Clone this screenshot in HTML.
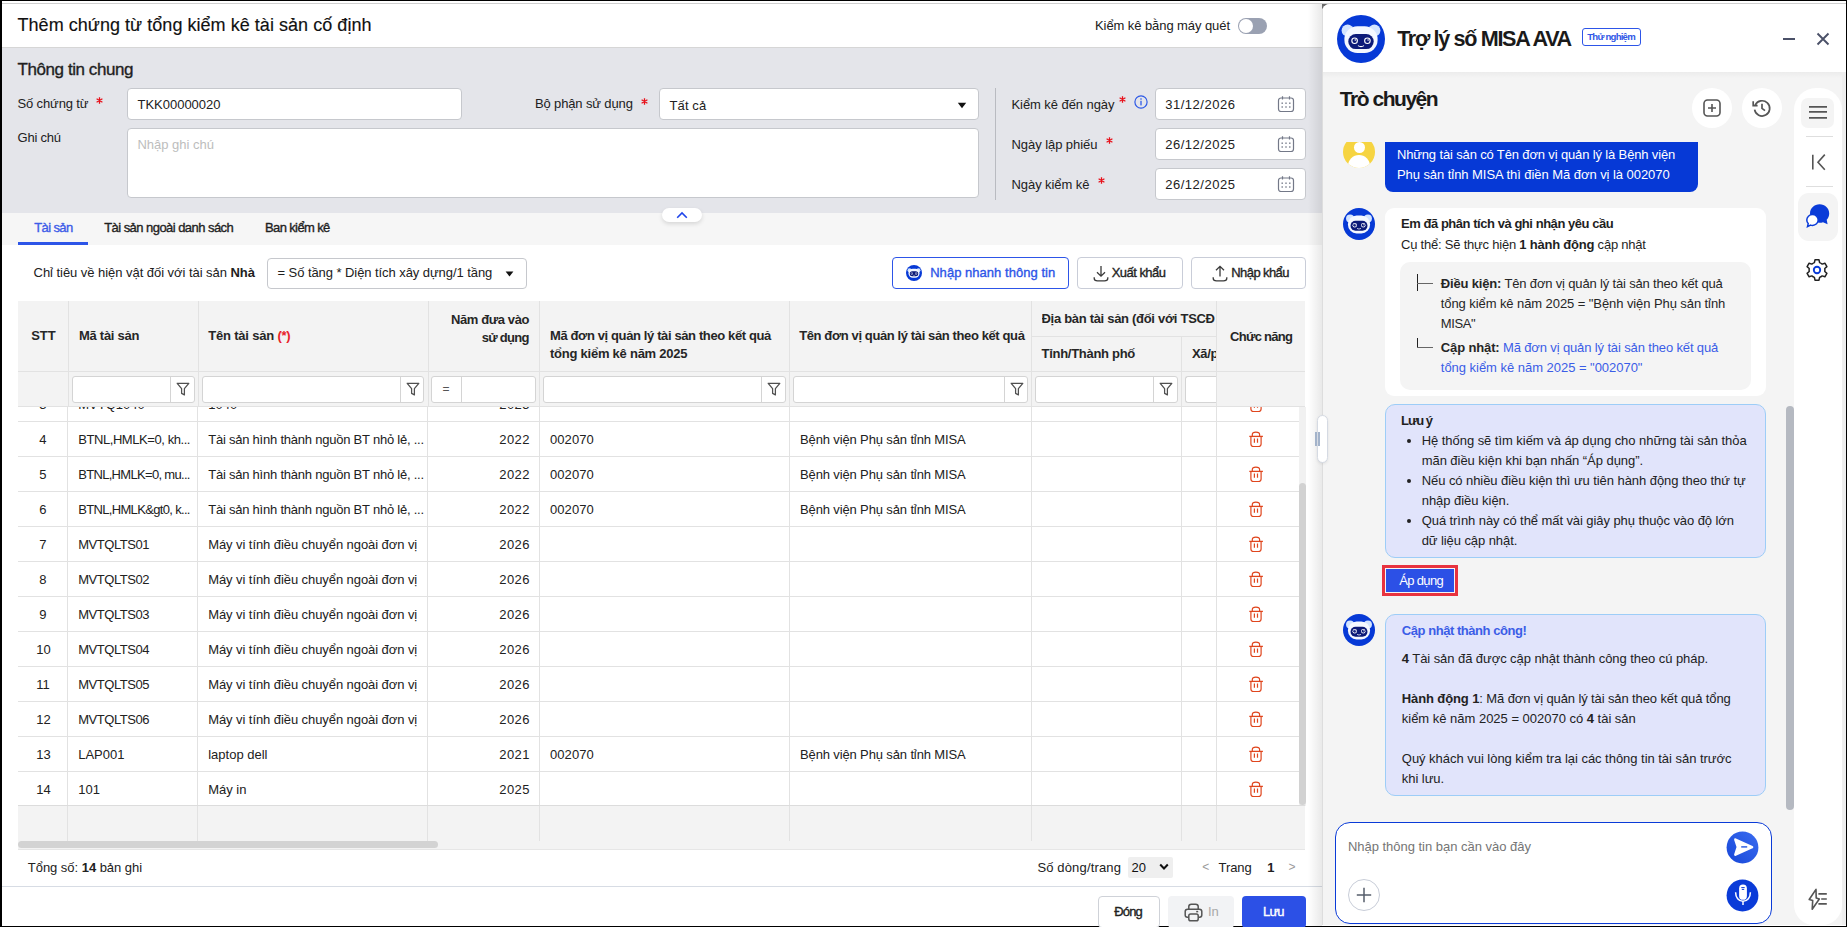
<!DOCTYPE html>
<html><head><meta charset="utf-8">
<style>
*{box-sizing:border-box;margin:0;padding:0}
html,body{width:1847px;height:927px;overflow:hidden;background:#000;font-family:"Liberation Sans",sans-serif;color:#212121;position:relative}
.a{position:absolute}
.t{position:absolute;white-space:nowrap}
.lbl{position:absolute;font-size:13px;color:#212121;white-space:nowrap}
.req{color:#e00;font-size:14px}
.inp{position:absolute;background:#fff;border:1px solid #c6c8cd;border-radius:4px;font-size:13px;color:#212121;padding-left:10px;white-space:nowrap}
.th{position:absolute;font-size:13px;font-weight:bold;color:#262626;white-space:nowrap}
.vl{position:absolute;width:1px;background:#e3e3e3}
.hl{position:absolute;height:1px;background:#e3e3e3}
.td{position:absolute;font-size:13px;color:#212121;white-space:nowrap;line-height:15px}
.btn{position:absolute;border:1px solid #c9cdd8;border-radius:4px;background:#fff;font-size:13px;white-space:nowrap}
.med{-webkit-text-stroke:0.35px currentColor}

</style></head>
<body>
<div class="a" style="left:2px;top:1px;width:1844px;height:925px;background:#fff"></div>
<div class="a" style="left:2px;top:3px;width:1844px;height:1px;background:#cfcfcf"></div>
<div class="a" style="left:2px;top:47px;width:1320px;height:1px;background:#d6d6d6;border-radius:0;"></div>
<div class="t" style="left:17.5px;top:15.3px;font-size:18px;line-height:normal;font-weight:normal;color:#111;letter-spacing:0.042px;-webkit-text-stroke:0.15px #111;">Thêm chứng từ tổng kiểm kê tài sản cố định</div>
<div class="t" style="left:1095.0px;top:17.5px;font-size:13px;line-height:normal;font-weight:normal;color:#212121;letter-spacing:-0.079px;">Kiểm kê bằng máy quét</div>
<div class="a" style="left:1238px;top:18px;width:29px;height:16px;background:#9aa1b2;border-radius:8px;"></div>
<div class="a" style="left:1239px;top:19px;width:14px;height:14px;background:#fff;border-radius:7px;"></div>
<div class="a" style="left:2px;top:48px;width:1320px;height:165px;background:#e4e5ea;border-radius:0;"></div>
<div class="t med" style="left:17.5px;top:59.8px;font-size:17px;line-height:normal;font-weight:normal;color:#1f1f1f;letter-spacing:-0.423px;">Thông tin chung</div>
<div class="t" style="left:17.5px;top:96.1px;font-size:13px;line-height:normal;font-weight:normal;color:#212121;letter-spacing:-0.134px;">Số chứng từ</div>
<svg class="a" style="left:96px;top:97px" width="7" height="7" viewBox="0 0 7 7"><path d="M3.5 0.2V6.8M0.6 1.8L6.4 5.2M6.4 1.8L0.6 5.2" stroke="#e8101a" stroke-width="1.3"/></svg><div class="a" style="left:127px;top:88px;width:335px;height:32px;background:#fff;border:1px solid #c6c8cd;border-radius:4px;"></div>
<div class="t" style="left:137.5px;top:97.4px;font-size:13px;line-height:normal;font-weight:normal;color:#212121;letter-spacing:-0.013px;">TKK00000020</div>
<div class="t" style="left:17.5px;top:130.0px;font-size:13px;line-height:normal;font-weight:normal;color:#212121;letter-spacing:-0.219px;">Ghi chú</div>
<div class="a" style="left:127px;top:128px;width:852px;height:70px;background:#fff;border:1px solid #c6c8cd;border-radius:4px;"></div>
<div class="t" style="left:137.5px;top:137.4px;font-size:13px;line-height:normal;font-weight:normal;color:#bdbdbd;letter-spacing:-0.02px;">Nhập ghi chú</div>
<div class="t" style="left:534.9px;top:96.4px;font-size:13px;line-height:normal;font-weight:normal;color:#212121;letter-spacing:-0.127px;">Bộ phận sử dụng</div>
<svg class="a" style="left:641px;top:97.5px" width="7" height="7" viewBox="0 0 7 7"><path d="M3.5 0.2V6.8M0.6 1.8L6.4 5.2M6.4 1.8L0.6 5.2" stroke="#e8101a" stroke-width="1.3"/></svg><div class="a" style="left:659px;top:88px;width:320px;height:32px;background:#fff;border:1px solid #c6c8cd;border-radius:4px;"></div>
<div class="t" style="left:669.5px;top:97.6px;font-size:13px;line-height:normal;font-weight:normal;color:#212121;letter-spacing:0.115px;">Tất cả</div>
<svg class="a" style="left:957px;top:102px" width="10" height="7" viewBox="0 0 10 7"><path d="M0.8 0.8H9.2L5 6.2Z" fill="#111"/></svg>
<div class="a" style="left:995px;top:88px;width:1px;height:112px;background:#b9bbc1;border-radius:0;"></div>
<div class="t" style="left:1011.5px;top:96.6px;font-size:13px;line-height:normal;font-weight:normal;color:#212121;letter-spacing:-0.072px;">Kiểm kê đến ngày</div>
<svg class="a" style="left:1118.5px;top:95.5px" width="7" height="7" viewBox="0 0 7 7"><path d="M3.5 0.2V6.8M0.6 1.8L6.4 5.2M6.4 1.8L0.6 5.2" stroke="#e8101a" stroke-width="1.3"/></svg><svg class="a" style="left:1134px;top:95px" width="14" height="14" viewBox="0 0 14 14"><circle cx="7" cy="7" r="6.1" fill="none" stroke="#2d59e6" stroke-width="1.2"/><rect x="6.35" y="5.8" width="1.3" height="4.6" fill="#2d59e6"/><rect x="6.35" y="3.3" width="1.3" height="1.4" fill="#2d59e6"/></svg>
<div class="t" style="left:1011.5px;top:136.6px;font-size:13px;line-height:normal;font-weight:normal;color:#212121;letter-spacing:-0.064px;">Ngày lập phiếu</div>
<svg class="a" style="left:1105.5px;top:137px" width="7" height="7" viewBox="0 0 7 7"><path d="M3.5 0.2V6.8M0.6 1.8L6.4 5.2M6.4 1.8L0.6 5.2" stroke="#e8101a" stroke-width="1.3"/></svg><div class="t" style="left:1011.5px;top:176.8px;font-size:13px;line-height:normal;font-weight:normal;color:#212121;letter-spacing:-0.068px;">Ngày kiểm kê</div>
<svg class="a" style="left:1097.5px;top:177px" width="7" height="7" viewBox="0 0 7 7"><path d="M3.5 0.2V6.8M0.6 1.8L6.4 5.2M6.4 1.8L0.6 5.2" stroke="#e8101a" stroke-width="1.3"/></svg><div class="a" style="left:1155px;top:88px;width:151px;height:32px;background:#fff;border:1px solid #c6c8cd;border-radius:4px;"></div>
<div class="t" style="left:1165.2px;top:97.4px;font-size:13px;line-height:normal;font-weight:normal;color:#212121;letter-spacing:0.514px;">31/12/2026</div>
<svg class="a" style="left:1277px;top:95px" width="18" height="18" viewBox="0 0 18 18"><rect x="1.5" y="3" width="15" height="13.5" rx="2.5" fill="none" stroke="#737888" stroke-width="1.2"/><path d="M5.5 1.2V4.5M12.5 1.2V4.5" stroke="#737888" stroke-width="1.2"/><g fill="#737888"><rect x="4.5" y="7.5" width="1.4" height="1.4"/><rect x="8.3" y="7.5" width="1.4" height="1.4"/><rect x="12.1" y="7.5" width="1.4" height="1.4"/><rect x="4.5" y="11.3" width="1.4" height="1.4"/><rect x="8.3" y="11.3" width="1.4" height="1.4"/><rect x="12.1" y="11.3" width="1.4" height="1.4"/></g></svg>
<div class="a" style="left:1155px;top:128px;width:151px;height:32px;background:#fff;border:1px solid #c6c8cd;border-radius:4px;"></div>
<div class="t" style="left:1165.2px;top:137.4px;font-size:13px;line-height:normal;font-weight:normal;color:#212121;letter-spacing:0.514px;">26/12/2025</div>
<svg class="a" style="left:1277px;top:135px" width="18" height="18" viewBox="0 0 18 18"><rect x="1.5" y="3" width="15" height="13.5" rx="2.5" fill="none" stroke="#737888" stroke-width="1.2"/><path d="M5.5 1.2V4.5M12.5 1.2V4.5" stroke="#737888" stroke-width="1.2"/><g fill="#737888"><rect x="4.5" y="7.5" width="1.4" height="1.4"/><rect x="8.3" y="7.5" width="1.4" height="1.4"/><rect x="12.1" y="7.5" width="1.4" height="1.4"/><rect x="4.5" y="11.3" width="1.4" height="1.4"/><rect x="8.3" y="11.3" width="1.4" height="1.4"/><rect x="12.1" y="11.3" width="1.4" height="1.4"/></g></svg>
<div class="a" style="left:1155px;top:168px;width:151px;height:32px;background:#fff;border:1px solid #c6c8cd;border-radius:4px;"></div>
<div class="t" style="left:1165.2px;top:177.4px;font-size:13px;line-height:normal;font-weight:normal;color:#212121;letter-spacing:0.514px;">26/12/2025</div>
<svg class="a" style="left:1277px;top:175px" width="18" height="18" viewBox="0 0 18 18"><rect x="1.5" y="3" width="15" height="13.5" rx="2.5" fill="none" stroke="#737888" stroke-width="1.2"/><path d="M5.5 1.2V4.5M12.5 1.2V4.5" stroke="#737888" stroke-width="1.2"/><g fill="#737888"><rect x="4.5" y="7.5" width="1.4" height="1.4"/><rect x="8.3" y="7.5" width="1.4" height="1.4"/><rect x="12.1" y="7.5" width="1.4" height="1.4"/><rect x="4.5" y="11.3" width="1.4" height="1.4"/><rect x="8.3" y="11.3" width="1.4" height="1.4"/><rect x="12.1" y="11.3" width="1.4" height="1.4"/></g></svg>
<div class="a" style="left:2px;top:213px;width:1320px;height:32px;background:#f6f6f6;border-radius:0;"></div>
<div class="a" style="left:662px;top:208px;width:40px;height:14px;background:#fff;border-radius:7px;box-shadow:0 2px 4px rgba(0,0,0,.13);"></div>
<svg class="a" style="left:676px;top:210.5px" width="12" height="8" viewBox="0 0 12 8"><path d="M1.2 6.8 L6 2 L10.8 6.8" fill="none" stroke="#1f45ea" stroke-width="1.6"/></svg>
<div class="t med" style="left:34.2px;top:220.4px;font-size:13px;line-height:normal;font-weight:normal;color:#3d5ce8;letter-spacing:-0.607px;">Tài sản</div>
<div class="a" style="left:18px;top:242px;width:70px;height:3px;background:#2d55e8;border-radius:0;"></div>
<div class="t med" style="left:104.2px;top:220.4px;font-size:13px;line-height:normal;font-weight:normal;color:#1f1f1f;letter-spacing:-0.548px;">Tài sản ngoài danh sách</div>
<div class="t med" style="left:265.0px;top:220.4px;font-size:13px;line-height:normal;font-weight:normal;color:#1f1f1f;letter-spacing:-0.625px;">Ban kiểm kê</div>
<div class="t" style="left:33.6px;top:265.0px;font-size:13px;line-height:normal;font-weight:normal;color:#212121;letter-spacing:-0.047px;">Chỉ tiêu về hiện vật đối với tài sản <b>Nhà</b></div>
<div class="a" style="left:267px;top:258px;width:260px;height:31px;background:#fff;border:1px solid #c6c8cd;border-radius:4px;"></div>
<div class="t" style="left:277.5px;top:265.4px;font-size:13px;line-height:normal;font-weight:normal;color:#212121;letter-spacing:-0.067px;">= Số tầng * Diện tích xây dựng/1 tầng</div>
<svg class="a" style="left:505px;top:271px" width="9" height="6" viewBox="0 0 9 6"><path d="M0.6 0.6H8.4L4.5 5.4Z" fill="#111"/></svg>
<div class="a" style="left:892px;top:257px;width:177px;height:32px;background:#fff;border:1px solid #2d55e8;border-radius:4px;"></div>
<svg class="a" style="left:906px;top:265px" width="16" height="16" viewBox="0 0 48 48"><circle cx="24" cy="24" r="24" fill="#0639d6"/><circle cx="10.6" cy="15.6" r="6" fill="#d3e4ff"/><circle cx="37.4" cy="15.6" r="6" fill="#d3e4ff"/><rect x="7.4" y="11.3" width="33.2" height="26.8" rx="13" fill="#f4f8ff"/><rect x="11.3" y="19" width="25.4" height="15.1" rx="7.5" fill="#0c1a78"/><circle cx="17.6" cy="25.8" r="3.3" fill="#fff"/><circle cx="17.6" cy="25.8" r="2.2" fill="#0c1a78"/><circle cx="18.3" cy="25" r="0.8" fill="#fff"/><circle cx="30.4" cy="25.8" r="3.3" fill="#fff"/><circle cx="30.4" cy="25.8" r="2.2" fill="#0c1a78"/><circle cx="31.1" cy="25" r="0.8" fill="#fff"/><path d="M21 30.6Q24 32.6 27 30.6" fill="none" stroke="#fff" stroke-width="1.1"/></svg>
<div class="t med" style="left:930.2px;top:264.9px;font-size:13px;line-height:normal;font-weight:normal;color:#2d55e8;letter-spacing:0.035px;">Nhập nhanh thông tin</div>
<div class="a" style="left:1077px;top:257px;width:106px;height:32px;background:#fff;border:1px solid #c9cdd8;border-radius:4px;"></div>
<svg class="a" style="left:1093px;top:265px" width="16" height="17" viewBox="0 0 16 17"><path d="M8 1V11M4 7.2L8 11.2L12 7.2" fill="none" stroke="#3a3a3a" stroke-width="1.3"/><path d="M1.2 12.2V13.2C1.2 15 2.8 15.8 4.5 15.8H11.5C13.2 15.8 14.8 15 14.8 13.2V12.2" fill="none" stroke="#3a3a3a" stroke-width="1.3"/></svg>
<div class="t med" style="left:1111.7px;top:265.1px;font-size:13px;line-height:normal;font-weight:normal;color:#1f1f1f;letter-spacing:-0.531px;">Xuất khẩu</div>
<div class="a" style="left:1191px;top:257px;width:115px;height:32px;background:#fff;border:1px solid #c9cdd8;border-radius:4px;"></div>
<svg class="a" style="left:1212px;top:265px" width="16" height="17" viewBox="0 0 16 17"><path d="M8 11.5V1.5M4 5.3L8 1.3L12 5.3" fill="none" stroke="#3a3a3a" stroke-width="1.3"/><path d="M1.2 12.2V13.2C1.2 15 2.8 15.8 4.5 15.8H11.5C13.2 15.8 14.8 15 14.8 13.2V12.2" fill="none" stroke="#3a3a3a" stroke-width="1.3"/></svg>
<div class="t med" style="left:1231.3px;top:265.1px;font-size:13px;line-height:normal;font-weight:normal;color:#1f1f1f;letter-spacing:-0.586px;">Nhập khẩu</div>
<div class="a" style="left:18px;top:301px;width:1287px;height:106px;background:#f3f3f3;border-radius:0;"></div>
<div class="a" style="left:18px;top:371px;width:1287px;height:1px;background:#e2e2e2;border-radius:0;"></div>
<div class="a" style="left:1031px;top:336px;width:185px;height:1px;background:#e2e2e2;border-radius:0;"></div>
<div class="a" style="left:68px;top:301px;width:1px;height:106px;background:#e2e2e2;border-radius:0;"></div>
<div class="a" style="left:198px;top:301px;width:1px;height:106px;background:#e2e2e2;border-radius:0;"></div>
<div class="a" style="left:428px;top:301px;width:1px;height:106px;background:#e2e2e2;border-radius:0;"></div>
<div class="a" style="left:539px;top:301px;width:1px;height:106px;background:#e2e2e2;border-radius:0;"></div>
<div class="a" style="left:789px;top:301px;width:1px;height:106px;background:#e2e2e2;border-radius:0;"></div>
<div class="a" style="left:1031px;top:301px;width:1px;height:106px;background:#e2e2e2;border-radius:0;"></div>
<div class="a" style="left:1181px;top:336px;width:1px;height:71px;background:#e2e2e2;border-radius:0;"></div>
<div class="t" style="left:31.2px;top:328.2px;font-size:13px;line-height:normal;font-weight:bold;color:#262626;letter-spacing:-0.031px;">STT</div>
<div class="t" style="left:78.9px;top:328.2px;font-size:13px;line-height:normal;font-weight:bold;color:#262626;letter-spacing:-0.251px;">Mã tài sản</div>
<div class="t" style="left:208.3px;top:328.2px;font-size:13px;line-height:normal;font-weight:bold;color:#262626;letter-spacing:-0.204px;">Tên tài sản <span style="color:#e8202a">(*)</span></div>
<div class="t" style="right:1317.6px;top:312.4px;font-size:13px;line-height:normal;font-weight:bold;color:#262626;text-align:right;letter-spacing:-0.399px;margin-right:0.399px;">Năm đưa vào</div>
<div class="t" style="right:1317.6px;top:330.2px;font-size:13px;line-height:normal;font-weight:bold;color:#262626;text-align:right;letter-spacing:-0.739px;margin-right:0.739px;">sử dụng</div>
<div class="t" style="left:550.0px;top:328.2px;font-size:13px;line-height:normal;font-weight:bold;color:#262626;letter-spacing:-0.38px;">Mã đơn vị quản lý tài sản theo kết quả</div>
<div class="t" style="left:550.0px;top:346.0px;font-size:13px;line-height:normal;font-weight:bold;color:#262626;letter-spacing:-0.242px;">tổng kiểm kê năm 2025</div>
<div class="t" style="left:799.2px;top:328.2px;font-size:13px;line-height:normal;font-weight:bold;color:#262626;letter-spacing:-0.387px;">Tên đơn vị quản lý tài sản theo kết quả</div>
<div class="t" style="left:1041.5px;top:310.9px;font-size:13px;line-height:normal;font-weight:bold;color:#262626;width:174px;overflow:hidden;letter-spacing:-0.3px;">Địa bàn tài sản (đối với TSCĐ là đất)</div>
<div class="t" style="left:1041.5px;top:345.9px;font-size:13px;line-height:normal;font-weight:bold;color:#262626;letter-spacing:-0.283px;">Tỉnh/Thành phố</div>
<div class="t" style="left:1191.9px;top:345.9px;font-size:13px;line-height:normal;font-weight:bold;color:#262626;width:24px;overflow:hidden;letter-spacing:-0.3px;">Xã/phường</div>
<div class="a" style="left:1216px;top:301px;width:89px;height:106px;background:#f3f3f3;border-radius:0;border-left:1px solid #e2e2e2;"></div>
<div class="t" style="left:1230.0px;top:328.6px;font-size:13px;line-height:normal;font-weight:bold;color:#262626;letter-spacing:-0.705px;">Chức năng</div>
<div class="a" style="left:1216px;top:371px;width:89px;height:1px;background:#e2e2e2;border-radius:0;"></div>
<div class="a" style="left:72px;top:376px;width:123px;height:27px;background:#fff;border:1px solid #d4d4d4;border-radius:3px;"></div>
<div class="a" style="left:170px;top:376px;width:1px;height:27px;background:#d4d4d4;border-radius:0;"></div>
<svg class="a" style="left:176px;top:382px" width="14" height="15" viewBox="0 0 14 15"><path d="M1.2 1.3H12.8L8.4 6.6V12.9L5.6 11.4V6.6Z" fill="none" stroke="#505050" stroke-width="1.25" stroke-linejoin="round"/></svg>
<div class="a" style="left:202px;top:376px;width:222px;height:27px;background:#fff;border:1px solid #d4d4d4;border-radius:3px;"></div>
<div class="a" style="left:400px;top:376px;width:1px;height:27px;background:#d4d4d4;border-radius:0;"></div>
<svg class="a" style="left:406px;top:382px" width="14" height="15" viewBox="0 0 14 15"><path d="M1.2 1.3H12.8L8.4 6.6V12.9L5.6 11.4V6.6Z" fill="none" stroke="#505050" stroke-width="1.25" stroke-linejoin="round"/></svg>
<div class="a" style="left:431px;top:376px;width:105px;height:27px;background:#fff;border:1px solid #d4d4d4;border-radius:3px;"></div>
<div class="a" style="left:461px;top:376px;width:1px;height:27px;background:#d4d4d4;border-radius:0;"></div>
<div class="t" style="left:442.5px;top:382.1px;font-size:12px;line-height:normal;font-weight:normal;color:#555;">=</div>
<div class="a" style="left:543px;top:376px;width:243px;height:27px;background:#fff;border:1px solid #d4d4d4;border-radius:3px;"></div>
<div class="a" style="left:761px;top:376px;width:1px;height:27px;background:#d4d4d4;border-radius:0;"></div>
<svg class="a" style="left:767px;top:382px" width="14" height="15" viewBox="0 0 14 15"><path d="M1.2 1.3H12.8L8.4 6.6V12.9L5.6 11.4V6.6Z" fill="none" stroke="#505050" stroke-width="1.25" stroke-linejoin="round"/></svg>
<div class="a" style="left:793px;top:376px;width:235px;height:27px;background:#fff;border:1px solid #d4d4d4;border-radius:3px;"></div>
<div class="a" style="left:1004px;top:376px;width:1px;height:27px;background:#d4d4d4;border-radius:0;"></div>
<svg class="a" style="left:1010px;top:382px" width="14" height="15" viewBox="0 0 14 15"><path d="M1.2 1.3H12.8L8.4 6.6V12.9L5.6 11.4V6.6Z" fill="none" stroke="#505050" stroke-width="1.25" stroke-linejoin="round"/></svg>
<div class="a" style="left:1035px;top:376px;width:143px;height:27px;background:#fff;border:1px solid #d4d4d4;border-radius:3px;"></div>
<div class="a" style="left:1153px;top:376px;width:1px;height:27px;background:#d4d4d4;border-radius:0;"></div>
<svg class="a" style="left:1159px;top:382px" width="14" height="15" viewBox="0 0 14 15"><path d="M1.2 1.3H12.8L8.4 6.6V12.9L5.6 11.4V6.6Z" fill="none" stroke="#505050" stroke-width="1.25" stroke-linejoin="round"/></svg>
<div class="a" style="left:1185px;top:376px;width:31px;height:27px;background:#fff;border-radius:3px 0 0 3px;border:1px solid #d4d4d4;border-right:none;"></div>
<div class="a" style="left:18px;top:407px;width:1281px;height:399px;overflow:hidden;background:#fff">
<div class="a" style="left:0px;top:14px;width:1281px;height:1px;background:#e2e2e2;border-radius:0;"></div>
<div class="t" style="left:21.2px;top:-9.7px;font-size:13px;line-height:normal;font-weight:normal;color:#212121;">3</div>
<div class="t" style="left:60.2px;top:-9.7px;font-size:13px;line-height:normal;font-weight:normal;color:#212121;">MVTQ1040</div>
<div class="t" style="left:190.2px;top:-9.7px;font-size:13px;line-height:normal;font-weight:normal;color:#212121;">1040</div>
<div class="t" style="right:769.5px;top:-9.7px;font-size:13px;line-height:normal;font-weight:normal;color:#212121;text-align:right;letter-spacing:0.426px;margin-right:-0.426px;">2025</div>
<svg class="a" style="left:1231px;top:-11px" width="15" height="17" viewBox="0 0 15 17"><path d="M0.3 5.4H13.9" stroke="#e0461e" stroke-width="1.3"/><path d="M3.3 5.4V3.6C3.3 1.9 4.5 1.1 6.9 1.1C9.3 1.1 10.6 1.9 10.6 3.6V5.4" fill="none" stroke="#e0461e" stroke-width="1.2"/><path d="M1.9 5.4V13C1.9 14.7 2.9 15.5 4.6 15.5H9.4C11.1 15.5 12.1 14.7 12.1 13V5.4" fill="none" stroke="#e0461e" stroke-width="1.2"/><path d="M5.4 7.4V11.8M8.5 7.4V11.8" stroke="#e0461e" stroke-width="1.2"/></svg>
<div class="a" style="left:0px;top:49px;width:1281px;height:1px;background:#e2e2e2;border-radius:0;"></div>
<div class="t" style="left:21.2px;top:25.3px;font-size:13px;line-height:normal;font-weight:normal;color:#212121;">4</div>
<div class="t" style="left:60.2px;top:25.3px;font-size:13px;line-height:normal;font-weight:normal;color:#212121;letter-spacing:-0.428px;">BTNL,HMLK=0, kh...</div>
<div class="t" style="left:190.2px;top:25.3px;font-size:13px;line-height:normal;font-weight:normal;color:#212121;letter-spacing:-0.227px;">Tài sản hình thành nguồn BT nhỏ lẻ, ...</div>
<div class="t" style="right:769.5px;top:25.3px;font-size:13px;line-height:normal;font-weight:normal;color:#212121;text-align:right;letter-spacing:0.426px;margin-right:-0.426px;">2022</div>
<div class="t" style="left:532.0px;top:25.3px;font-size:13px;line-height:normal;font-weight:normal;color:#212121;letter-spacing:0.082px;">002070</div>
<div class="t" style="left:782.0px;top:25.3px;font-size:13px;line-height:normal;font-weight:normal;color:#212121;letter-spacing:-0.131px;">Bệnh viện Phụ sản tỉnh MISA</div>
<svg class="a" style="left:1231px;top:24px" width="15" height="17" viewBox="0 0 15 17"><path d="M0.3 5.4H13.9" stroke="#e0461e" stroke-width="1.3"/><path d="M3.3 5.4V3.6C3.3 1.9 4.5 1.1 6.9 1.1C9.3 1.1 10.6 1.9 10.6 3.6V5.4" fill="none" stroke="#e0461e" stroke-width="1.2"/><path d="M1.9 5.4V13C1.9 14.7 2.9 15.5 4.6 15.5H9.4C11.1 15.5 12.1 14.7 12.1 13V5.4" fill="none" stroke="#e0461e" stroke-width="1.2"/><path d="M5.4 7.4V11.8M8.5 7.4V11.8" stroke="#e0461e" stroke-width="1.2"/></svg>
<div class="a" style="left:0px;top:84px;width:1281px;height:1px;background:#e2e2e2;border-radius:0;"></div>
<div class="t" style="left:21.2px;top:60.3px;font-size:13px;line-height:normal;font-weight:normal;color:#212121;">5</div>
<div class="t" style="left:60.2px;top:60.3px;font-size:13px;line-height:normal;font-weight:normal;color:#212121;letter-spacing:-0.683px;">BTNL,HMLK=0, mu...</div>
<div class="t" style="left:190.2px;top:60.3px;font-size:13px;line-height:normal;font-weight:normal;color:#212121;letter-spacing:-0.227px;">Tài sản hình thành nguồn BT nhỏ lẻ, ...</div>
<div class="t" style="right:769.5px;top:60.3px;font-size:13px;line-height:normal;font-weight:normal;color:#212121;text-align:right;letter-spacing:0.426px;margin-right:-0.426px;">2022</div>
<div class="t" style="left:532.0px;top:60.3px;font-size:13px;line-height:normal;font-weight:normal;color:#212121;letter-spacing:0.082px;">002070</div>
<div class="t" style="left:782.0px;top:60.3px;font-size:13px;line-height:normal;font-weight:normal;color:#212121;letter-spacing:-0.131px;">Bệnh viện Phụ sản tỉnh MISA</div>
<svg class="a" style="left:1231px;top:59px" width="15" height="17" viewBox="0 0 15 17"><path d="M0.3 5.4H13.9" stroke="#e0461e" stroke-width="1.3"/><path d="M3.3 5.4V3.6C3.3 1.9 4.5 1.1 6.9 1.1C9.3 1.1 10.6 1.9 10.6 3.6V5.4" fill="none" stroke="#e0461e" stroke-width="1.2"/><path d="M1.9 5.4V13C1.9 14.7 2.9 15.5 4.6 15.5H9.4C11.1 15.5 12.1 14.7 12.1 13V5.4" fill="none" stroke="#e0461e" stroke-width="1.2"/><path d="M5.4 7.4V11.8M8.5 7.4V11.8" stroke="#e0461e" stroke-width="1.2"/></svg>
<div class="a" style="left:0px;top:119px;width:1281px;height:1px;background:#e2e2e2;border-radius:0;"></div>
<div class="t" style="left:21.2px;top:95.3px;font-size:13px;line-height:normal;font-weight:normal;color:#212121;">6</div>
<div class="t" style="left:60.2px;top:95.3px;font-size:13px;line-height:normal;font-weight:normal;color:#212121;letter-spacing:-0.665px;">BTNL,HMLK&amp;gt0, k...</div>
<div class="t" style="left:190.2px;top:95.3px;font-size:13px;line-height:normal;font-weight:normal;color:#212121;letter-spacing:-0.227px;">Tài sản hình thành nguồn BT nhỏ lẻ, ...</div>
<div class="t" style="right:769.5px;top:95.3px;font-size:13px;line-height:normal;font-weight:normal;color:#212121;text-align:right;letter-spacing:0.426px;margin-right:-0.426px;">2022</div>
<div class="t" style="left:532.0px;top:95.3px;font-size:13px;line-height:normal;font-weight:normal;color:#212121;letter-spacing:0.082px;">002070</div>
<div class="t" style="left:782.0px;top:95.3px;font-size:13px;line-height:normal;font-weight:normal;color:#212121;letter-spacing:-0.131px;">Bệnh viện Phụ sản tỉnh MISA</div>
<svg class="a" style="left:1231px;top:94px" width="15" height="17" viewBox="0 0 15 17"><path d="M0.3 5.4H13.9" stroke="#e0461e" stroke-width="1.3"/><path d="M3.3 5.4V3.6C3.3 1.9 4.5 1.1 6.9 1.1C9.3 1.1 10.6 1.9 10.6 3.6V5.4" fill="none" stroke="#e0461e" stroke-width="1.2"/><path d="M1.9 5.4V13C1.9 14.7 2.9 15.5 4.6 15.5H9.4C11.1 15.5 12.1 14.7 12.1 13V5.4" fill="none" stroke="#e0461e" stroke-width="1.2"/><path d="M5.4 7.4V11.8M8.5 7.4V11.8" stroke="#e0461e" stroke-width="1.2"/></svg>
<div class="a" style="left:0px;top:154px;width:1281px;height:1px;background:#e2e2e2;border-radius:0;"></div>
<div class="t" style="left:21.2px;top:130.3px;font-size:13px;line-height:normal;font-weight:normal;color:#212121;">7</div>
<div class="t" style="left:60.2px;top:130.3px;font-size:13px;line-height:normal;font-weight:normal;color:#212121;letter-spacing:-0.436px;">MVTQLTS01</div>
<div class="t" style="left:190.2px;top:130.3px;font-size:13px;line-height:normal;font-weight:normal;color:#212121;letter-spacing:-0.074px;">Máy vi tính điều chuyển ngoài đơn vị</div>
<div class="t" style="right:769.5px;top:130.3px;font-size:13px;line-height:normal;font-weight:normal;color:#212121;text-align:right;letter-spacing:0.426px;margin-right:-0.426px;">2026</div>
<svg class="a" style="left:1231px;top:129px" width="15" height="17" viewBox="0 0 15 17"><path d="M0.3 5.4H13.9" stroke="#e0461e" stroke-width="1.3"/><path d="M3.3 5.4V3.6C3.3 1.9 4.5 1.1 6.9 1.1C9.3 1.1 10.6 1.9 10.6 3.6V5.4" fill="none" stroke="#e0461e" stroke-width="1.2"/><path d="M1.9 5.4V13C1.9 14.7 2.9 15.5 4.6 15.5H9.4C11.1 15.5 12.1 14.7 12.1 13V5.4" fill="none" stroke="#e0461e" stroke-width="1.2"/><path d="M5.4 7.4V11.8M8.5 7.4V11.8" stroke="#e0461e" stroke-width="1.2"/></svg>
<div class="a" style="left:0px;top:189px;width:1281px;height:1px;background:#e2e2e2;border-radius:0;"></div>
<div class="t" style="left:21.2px;top:165.3px;font-size:13px;line-height:normal;font-weight:normal;color:#212121;">8</div>
<div class="t" style="left:60.2px;top:165.3px;font-size:13px;line-height:normal;font-weight:normal;color:#212121;letter-spacing:-0.436px;">MVTQLTS02</div>
<div class="t" style="left:190.2px;top:165.3px;font-size:13px;line-height:normal;font-weight:normal;color:#212121;letter-spacing:-0.074px;">Máy vi tính điều chuyển ngoài đơn vị</div>
<div class="t" style="right:769.5px;top:165.3px;font-size:13px;line-height:normal;font-weight:normal;color:#212121;text-align:right;letter-spacing:0.426px;margin-right:-0.426px;">2026</div>
<svg class="a" style="left:1231px;top:164px" width="15" height="17" viewBox="0 0 15 17"><path d="M0.3 5.4H13.9" stroke="#e0461e" stroke-width="1.3"/><path d="M3.3 5.4V3.6C3.3 1.9 4.5 1.1 6.9 1.1C9.3 1.1 10.6 1.9 10.6 3.6V5.4" fill="none" stroke="#e0461e" stroke-width="1.2"/><path d="M1.9 5.4V13C1.9 14.7 2.9 15.5 4.6 15.5H9.4C11.1 15.5 12.1 14.7 12.1 13V5.4" fill="none" stroke="#e0461e" stroke-width="1.2"/><path d="M5.4 7.4V11.8M8.5 7.4V11.8" stroke="#e0461e" stroke-width="1.2"/></svg>
<div class="a" style="left:0px;top:224px;width:1281px;height:1px;background:#e2e2e2;border-radius:0;"></div>
<div class="t" style="left:21.2px;top:200.3px;font-size:13px;line-height:normal;font-weight:normal;color:#212121;">9</div>
<div class="t" style="left:60.2px;top:200.3px;font-size:13px;line-height:normal;font-weight:normal;color:#212121;letter-spacing:-0.436px;">MVTQLTS03</div>
<div class="t" style="left:190.2px;top:200.3px;font-size:13px;line-height:normal;font-weight:normal;color:#212121;letter-spacing:-0.074px;">Máy vi tính điều chuyển ngoài đơn vị</div>
<div class="t" style="right:769.5px;top:200.3px;font-size:13px;line-height:normal;font-weight:normal;color:#212121;text-align:right;letter-spacing:0.426px;margin-right:-0.426px;">2026</div>
<svg class="a" style="left:1231px;top:199px" width="15" height="17" viewBox="0 0 15 17"><path d="M0.3 5.4H13.9" stroke="#e0461e" stroke-width="1.3"/><path d="M3.3 5.4V3.6C3.3 1.9 4.5 1.1 6.9 1.1C9.3 1.1 10.6 1.9 10.6 3.6V5.4" fill="none" stroke="#e0461e" stroke-width="1.2"/><path d="M1.9 5.4V13C1.9 14.7 2.9 15.5 4.6 15.5H9.4C11.1 15.5 12.1 14.7 12.1 13V5.4" fill="none" stroke="#e0461e" stroke-width="1.2"/><path d="M5.4 7.4V11.8M8.5 7.4V11.8" stroke="#e0461e" stroke-width="1.2"/></svg>
<div class="a" style="left:0px;top:259px;width:1281px;height:1px;background:#e2e2e2;border-radius:0;"></div>
<div class="t" style="left:18.2px;top:235.3px;font-size:13px;line-height:normal;font-weight:normal;color:#212121;">10</div>
<div class="t" style="left:60.2px;top:235.3px;font-size:13px;line-height:normal;font-weight:normal;color:#212121;letter-spacing:-0.436px;">MVTQLTS04</div>
<div class="t" style="left:190.2px;top:235.3px;font-size:13px;line-height:normal;font-weight:normal;color:#212121;letter-spacing:-0.074px;">Máy vi tính điều chuyển ngoài đơn vị</div>
<div class="t" style="right:769.5px;top:235.3px;font-size:13px;line-height:normal;font-weight:normal;color:#212121;text-align:right;letter-spacing:0.426px;margin-right:-0.426px;">2026</div>
<svg class="a" style="left:1231px;top:234px" width="15" height="17" viewBox="0 0 15 17"><path d="M0.3 5.4H13.9" stroke="#e0461e" stroke-width="1.3"/><path d="M3.3 5.4V3.6C3.3 1.9 4.5 1.1 6.9 1.1C9.3 1.1 10.6 1.9 10.6 3.6V5.4" fill="none" stroke="#e0461e" stroke-width="1.2"/><path d="M1.9 5.4V13C1.9 14.7 2.9 15.5 4.6 15.5H9.4C11.1 15.5 12.1 14.7 12.1 13V5.4" fill="none" stroke="#e0461e" stroke-width="1.2"/><path d="M5.4 7.4V11.8M8.5 7.4V11.8" stroke="#e0461e" stroke-width="1.2"/></svg>
<div class="a" style="left:0px;top:294px;width:1281px;height:1px;background:#e2e2e2;border-radius:0;"></div>
<div class="t" style="left:18.2px;top:270.3px;font-size:13px;line-height:normal;font-weight:normal;color:#212121;">11</div>
<div class="t" style="left:60.2px;top:270.3px;font-size:13px;line-height:normal;font-weight:normal;color:#212121;letter-spacing:-0.436px;">MVTQLTS05</div>
<div class="t" style="left:190.2px;top:270.3px;font-size:13px;line-height:normal;font-weight:normal;color:#212121;letter-spacing:-0.074px;">Máy vi tính điều chuyển ngoài đơn vị</div>
<div class="t" style="right:769.5px;top:270.3px;font-size:13px;line-height:normal;font-weight:normal;color:#212121;text-align:right;letter-spacing:0.426px;margin-right:-0.426px;">2026</div>
<svg class="a" style="left:1231px;top:269px" width="15" height="17" viewBox="0 0 15 17"><path d="M0.3 5.4H13.9" stroke="#e0461e" stroke-width="1.3"/><path d="M3.3 5.4V3.6C3.3 1.9 4.5 1.1 6.9 1.1C9.3 1.1 10.6 1.9 10.6 3.6V5.4" fill="none" stroke="#e0461e" stroke-width="1.2"/><path d="M1.9 5.4V13C1.9 14.7 2.9 15.5 4.6 15.5H9.4C11.1 15.5 12.1 14.7 12.1 13V5.4" fill="none" stroke="#e0461e" stroke-width="1.2"/><path d="M5.4 7.4V11.8M8.5 7.4V11.8" stroke="#e0461e" stroke-width="1.2"/></svg>
<div class="a" style="left:0px;top:329px;width:1281px;height:1px;background:#e2e2e2;border-radius:0;"></div>
<div class="t" style="left:18.2px;top:305.3px;font-size:13px;line-height:normal;font-weight:normal;color:#212121;">12</div>
<div class="t" style="left:60.2px;top:305.3px;font-size:13px;line-height:normal;font-weight:normal;color:#212121;letter-spacing:-0.436px;">MVTQLTS06</div>
<div class="t" style="left:190.2px;top:305.3px;font-size:13px;line-height:normal;font-weight:normal;color:#212121;letter-spacing:-0.074px;">Máy vi tính điều chuyển ngoài đơn vị</div>
<div class="t" style="right:769.5px;top:305.3px;font-size:13px;line-height:normal;font-weight:normal;color:#212121;text-align:right;letter-spacing:0.426px;margin-right:-0.426px;">2026</div>
<svg class="a" style="left:1231px;top:304px" width="15" height="17" viewBox="0 0 15 17"><path d="M0.3 5.4H13.9" stroke="#e0461e" stroke-width="1.3"/><path d="M3.3 5.4V3.6C3.3 1.9 4.5 1.1 6.9 1.1C9.3 1.1 10.6 1.9 10.6 3.6V5.4" fill="none" stroke="#e0461e" stroke-width="1.2"/><path d="M1.9 5.4V13C1.9 14.7 2.9 15.5 4.6 15.5H9.4C11.1 15.5 12.1 14.7 12.1 13V5.4" fill="none" stroke="#e0461e" stroke-width="1.2"/><path d="M5.4 7.4V11.8M8.5 7.4V11.8" stroke="#e0461e" stroke-width="1.2"/></svg>
<div class="a" style="left:0px;top:364px;width:1281px;height:1px;background:#e2e2e2;border-radius:0;"></div>
<div class="t" style="left:18.2px;top:340.3px;font-size:13px;line-height:normal;font-weight:normal;color:#212121;">13</div>
<div class="t" style="left:60.2px;top:340.3px;font-size:13px;line-height:normal;font-weight:normal;color:#212121;">LAP001</div>
<div class="t" style="left:190.2px;top:340.3px;font-size:13px;line-height:normal;font-weight:normal;color:#212121;">laptop dell</div>
<div class="t" style="right:769.5px;top:340.3px;font-size:13px;line-height:normal;font-weight:normal;color:#212121;text-align:right;letter-spacing:0.426px;margin-right:-0.426px;">2021</div>
<div class="t" style="left:532.0px;top:340.3px;font-size:13px;line-height:normal;font-weight:normal;color:#212121;letter-spacing:0.082px;">002070</div>
<div class="t" style="left:782.0px;top:340.3px;font-size:13px;line-height:normal;font-weight:normal;color:#212121;letter-spacing:-0.131px;">Bệnh viện Phụ sản tỉnh MISA</div>
<svg class="a" style="left:1231px;top:339px" width="15" height="17" viewBox="0 0 15 17"><path d="M0.3 5.4H13.9" stroke="#e0461e" stroke-width="1.3"/><path d="M3.3 5.4V3.6C3.3 1.9 4.5 1.1 6.9 1.1C9.3 1.1 10.6 1.9 10.6 3.6V5.4" fill="none" stroke="#e0461e" stroke-width="1.2"/><path d="M1.9 5.4V13C1.9 14.7 2.9 15.5 4.6 15.5H9.4C11.1 15.5 12.1 14.7 12.1 13V5.4" fill="none" stroke="#e0461e" stroke-width="1.2"/><path d="M5.4 7.4V11.8M8.5 7.4V11.8" stroke="#e0461e" stroke-width="1.2"/></svg>
<div class="a" style="left:0px;top:399px;width:1281px;height:1px;background:#e2e2e2;border-radius:0;"></div>
<div class="t" style="left:18.2px;top:375.3px;font-size:13px;line-height:normal;font-weight:normal;color:#212121;">14</div>
<div class="t" style="left:60.2px;top:375.3px;font-size:13px;line-height:normal;font-weight:normal;color:#212121;">101</div>
<div class="t" style="left:190.2px;top:375.3px;font-size:13px;line-height:normal;font-weight:normal;color:#212121;">Máy in</div>
<div class="t" style="right:769.5px;top:375.3px;font-size:13px;line-height:normal;font-weight:normal;color:#212121;text-align:right;letter-spacing:0.426px;margin-right:-0.426px;">2025</div>
<svg class="a" style="left:1231px;top:374px" width="15" height="17" viewBox="0 0 15 17"><path d="M0.3 5.4H13.9" stroke="#e0461e" stroke-width="1.3"/><path d="M3.3 5.4V3.6C3.3 1.9 4.5 1.1 6.9 1.1C9.3 1.1 10.6 1.9 10.6 3.6V5.4" fill="none" stroke="#e0461e" stroke-width="1.2"/><path d="M1.9 5.4V13C1.9 14.7 2.9 15.5 4.6 15.5H9.4C11.1 15.5 12.1 14.7 12.1 13V5.4" fill="none" stroke="#e0461e" stroke-width="1.2"/><path d="M5.4 7.4V11.8M8.5 7.4V11.8" stroke="#e0461e" stroke-width="1.2"/></svg>
<div class="a" style="left:49px;top:0px;width:1px;height:399px;background:#e2e2e2;border-radius:0;"></div>
<div class="a" style="left:179px;top:0px;width:1px;height:399px;background:#e2e2e2;border-radius:0;"></div>
<div class="a" style="left:409px;top:0px;width:1px;height:399px;background:#e2e2e2;border-radius:0;"></div>
<div class="a" style="left:521px;top:0px;width:1px;height:399px;background:#e2e2e2;border-radius:0;"></div>
<div class="a" style="left:771px;top:0px;width:1px;height:399px;background:#e2e2e2;border-radius:0;"></div>
<div class="a" style="left:1013px;top:0px;width:1px;height:399px;background:#e2e2e2;border-radius:0;"></div>
<div class="a" style="left:1163px;top:0px;width:1px;height:399px;background:#e2e2e2;border-radius:0;"></div>
<div class="a" style="left:1198px;top:0px;width:1px;height:399px;background:#e2e2e2;border-radius:0;"></div>
</div>
<div class="a" style="left:1299px;top:407px;width:7px;height:399px;background:#f1f1f1;border-radius:0;"></div>
<div class="a" style="left:1299px;top:483px;width:7px;height:322px;background:#d2d2d2;border-radius:4px;"></div>
<div class="a" style="left:18px;top:406px;width:1287px;height:1px;background:#e2e2e2;border-radius:0;"></div>
<div class="a" style="left:18px;top:805px;width:1287px;height:1px;background:#dcdcdc;border-radius:0;"></div>
<div class="a" style="left:18px;top:806px;width:1287px;height:35px;background:#f3f3f3;border-radius:0;"></div>
<div class="a" style="left:67px;top:806px;width:1px;height:35px;background:#e2e2e2;border-radius:0;"></div>
<div class="a" style="left:197px;top:806px;width:1px;height:35px;background:#e2e2e2;border-radius:0;"></div>
<div class="a" style="left:427px;top:806px;width:1px;height:35px;background:#e2e2e2;border-radius:0;"></div>
<div class="a" style="left:539px;top:806px;width:1px;height:35px;background:#e2e2e2;border-radius:0;"></div>
<div class="a" style="left:789px;top:806px;width:1px;height:35px;background:#e2e2e2;border-radius:0;"></div>
<div class="a" style="left:1031px;top:806px;width:1px;height:35px;background:#e2e2e2;border-radius:0;"></div>
<div class="a" style="left:1181px;top:806px;width:1px;height:35px;background:#e2e2e2;border-radius:0;"></div>
<div class="a" style="left:1216px;top:806px;width:1px;height:35px;background:#e2e2e2;border-radius:0;"></div>
<div class="a" style="left:18px;top:841px;width:1287px;height:8px;background:#f3f3f3;border-radius:0;"></div>
<div class="a" style="left:18px;top:841px;width:420px;height:7px;background:#d3d3d3;border-radius:4px;"></div>
<div class="a" style="left:18px;top:849px;width:1287px;height:1px;background:#e6e6e6;border-radius:0;"></div>
<div class="t" style="left:27.8px;top:860.3px;font-size:13px;line-height:normal;font-weight:normal;color:#212121;letter-spacing:-0.035px;">Tổng số: <b>14</b> bản ghi</div>
<div class="t" style="left:1037.4px;top:859.7px;font-size:13px;line-height:normal;font-weight:normal;color:#212121;letter-spacing:0.151px;">Số dòng/trang</div>
<div class="a" style="left:1128px;top:857px;width:45px;height:21px;background:#efefef;border-radius:2px;"></div>
<div class="t" style="left:1131.5px;top:859.7px;font-size:13px;line-height:normal;font-weight:normal;color:#111;letter-spacing:-0.069px;">20</div>
<svg class="a" style="left:1159px;top:863px" width="10" height="8" viewBox="0 0 10 8"><path d="M1.2 1.5L5 5.5L8.8 1.5" fill="none" stroke="#111" stroke-width="2"/></svg>
<div class="t" style="left:1202.2px;top:859.6px;font-size:12px;line-height:normal;font-weight:normal;color:#9a9a9a;">&lt;</div>
<div class="t" style="left:1218.5px;top:859.7px;font-size:13px;line-height:normal;font-weight:normal;color:#212121;letter-spacing:-0.071px;">Trang</div>
<div class="t" style="left:1267.2px;top:859.7px;font-size:13px;line-height:normal;font-weight:bold;color:#212121;">1</div>
<div class="t" style="left:1288.5px;top:859.6px;font-size:12px;line-height:normal;font-weight:normal;color:#9a9a9a;">&gt;</div>
<div class="a" style="left:2px;top:886px;width:1320px;height:1px;background:#d7dce4;border-radius:0;"></div>
<div class="a" style="left:1098px;top:896px;width:62px;height:32px;background:#fff;border:1px solid #cfd2d8;border-radius:4px;"></div>
<div class="t med" style="left:1114.2px;top:904.0px;font-size:13px;line-height:normal;font-weight:normal;color:#222;letter-spacing:-0.826px;">Đóng</div>
<div class="a" style="left:1168px;top:896px;width:66px;height:32px;background:#f2f3f5;border-radius:4px;"></div>
<svg class="a" style="left:1184px;top:903px" width="19" height="19" viewBox="0 0 19 19"><path d="M4.8 6.2V3.6C4.8 2 5.8 1.2 7.4 1.2H11.6C13.2 1.2 14.2 2 14.2 3.6V6.2" fill="none" stroke="#555" stroke-width="1.5"/><path d="M4.6 14.2H3.4C2 14.2 1.2 13.4 1.2 12V8.6C1.2 7.2 2.2 6.2 3.6 6.2H15.4C16.8 6.2 17.8 7.2 17.8 8.6V12C17.8 13.4 17 14.2 15.6 14.2H14.4" fill="none" stroke="#555" stroke-width="1.5"/><rect x="4.8" y="11" width="9.4" height="6.8" rx="1.8" fill="none" stroke="#555" stroke-width="1.5"/><path d="M12.2 8.6H14.2" stroke="#555" stroke-width="1.5"/></svg>
<div class="t" style="left:1207.9px;top:904.0px;font-size:13px;line-height:normal;font-weight:normal;color:#a8a8a8;">In</div>
<div class="a" style="left:1242px;top:896px;width:64px;height:32px;background:#2c50e6;border-radius:4px;"></div>
<div class="t med" style="left:1263.1px;top:904.0px;font-size:13px;line-height:normal;font-weight:normal;color:#fff;letter-spacing:-0.936px;">Lưu</div>
<div class="a" style="left:1308px;top:4px;width:14px;height:922px;background:linear-gradient(to right,rgba(0,0,0,0),rgba(0,0,0,0.085));border-radius:0;"></div>
<div class="a" style="left:1322px;top:4px;width:8px;height:8px;background:#6a6a6a;border-radius:0;"></div>
<div class="a" style="left:1322px;top:4px;width:524px;height:921px;background:#f4f4f4;border-top-left-radius:8px;overflow:hidden">
<div class="a" style="left:0px;top:0px;width:524px;height:68px;background:#fff;border-radius:0;"></div>
<div class="a" style="left:0px;top:68px;width:524px;height:6px;background:linear-gradient(rgba(0,0,0,0.035),rgba(0,0,0,0));border-radius:0;"></div>
</div>
<svg class="a" style="left:1336.5px;top:14.7px" width="48" height="48" viewBox="0 0 48 48"><circle cx="24" cy="24" r="24" fill="#0639d6"/><circle cx="10.6" cy="15.6" r="6" fill="#d3e4ff"/><circle cx="37.4" cy="15.6" r="6" fill="#d3e4ff"/><rect x="7.4" y="11.3" width="33.2" height="26.8" rx="13" fill="#f4f8ff"/><rect x="11.3" y="19" width="25.4" height="15.1" rx="7.5" fill="#0c1a78"/><circle cx="17.6" cy="25.8" r="3.3" fill="#fff"/><circle cx="17.6" cy="25.8" r="2.2" fill="#0c1a78"/><circle cx="18.3" cy="25" r="0.8" fill="#fff"/><circle cx="30.4" cy="25.8" r="3.3" fill="#fff"/><circle cx="30.4" cy="25.8" r="2.2" fill="#0c1a78"/><circle cx="31.1" cy="25" r="0.8" fill="#fff"/><path d="M21 30.6Q24 32.6 27 30.6" fill="none" stroke="#fff" stroke-width="1.1"/></svg>
<div class="t" style="left:1397.2px;top:25.8px;font-size:21.6px;line-height:normal;font-weight:bold;color:#1a1a1a;letter-spacing:-1.337px;">Trợ lý số MISA AVA</div>
<div class="a" style="left:1582px;top:28px;width:59px;height:18px;background:transparent;border:1px solid #2d55e8;border-radius:3px;"></div>
<div class="t" style="left:1587.3px;top:30.9px;font-size:9.6px;line-height:normal;font-weight:bold;color:#3158e6;letter-spacing:-0.784px;">Thử nghiệm</div>
<div class="a" style="left:1783px;top:38px;width:12px;height:2px;background:#4b5168;border-radius:0;"></div>
<svg class="a" style="left:1816px;top:32px" width="14" height="14" viewBox="0 0 14 14"><path d="M1.5 1.5L12.5 12.5M12.5 1.5L1.5 12.5" stroke="#4b5168" stroke-width="1.9"/></svg>
<div class="t" style="left:1339.7px;top:87.2px;font-size:21px;line-height:normal;font-weight:bold;color:#1a1a1a;letter-spacing:-1.448px;">Trò chuyện</div>
<div class="a" style="left:1692px;top:88px;width:40px;height:40px;background:#fff;border-radius:20px;"></div>
<svg class="a" style="left:1702px;top:98px" width="20" height="20" viewBox="0 0 20 20"><rect x="2" y="2" width="16" height="16" rx="3.5" fill="none" stroke="#555" stroke-width="1.6"/><path d="M10 6V14M6 10H14" stroke="#555" stroke-width="1.6"/></svg>
<div class="a" style="left:1742px;top:88px;width:40px;height:40px;background:#fff;border-radius:20px;"></div>
<svg class="a" style="left:1751px;top:97px" width="22" height="22" viewBox="0 0 22 22"><path d="M4.2 8.2A7.6 7.6 0 1 1 3.6 12.6" fill="none" stroke="#555" stroke-width="1.7"/><path d="M2.2 4.2V8.6H6.6" fill="none" stroke="#555" stroke-width="1.7"/><path d="M11 6.8V11.4L14 13.6" fill="none" stroke="#555" stroke-width="1.7"/></svg>
<div class="a" style="left:1842px;top:72px;width:4px;height:853px;background:#eeeeee;border-radius:0;"></div>
<div class="a" style="left:1794px;top:88px;width:48px;height:837px;background:#fff;border-radius:22px 22px 20px 20px;"></div>
<div class="a" style="left:1801px;top:98px;width:33px;height:30px;background:#f4f4f4;border-radius:7px;"></div>
<svg class="a" style="left:1808px;top:105px" width="20" height="15" viewBox="0 0 20 15"><path d="M1 1.9H19M1 6.9H19M1 12.8H19" stroke="#555" stroke-width="1.7"/></svg>
<div class="a" style="left:1806px;top:136px;width:27px;height:1px;background:#dedede;border-radius:0;"></div>
<svg class="a" style="left:1810px;top:153px" width="18" height="18" viewBox="0 0 18 18"><path d="M2.8 1.8V16.6" stroke="#555" stroke-width="1.6"/><path d="M14.8 1.6L8 9.2L14.8 16.8" fill="none" stroke="#555" stroke-width="1.6"/></svg>
<div class="a" style="left:1806px;top:186px;width:27px;height:1px;background:#dedede;border-radius:0;"></div>
<div class="a" style="left:1798px;top:193px;width:40px;height:48px;background:#f4f4f4;border-radius:11px;"></div>
<svg class="a" style="left:1804px;top:202px" width="28" height="28" viewBox="0 0 28 28"><path d="M15.6 2.3C21 2.3 25.2 6.4 25.2 11.5C25.2 14 24.3 16.1 22.7 17.8L23.6 22.3L19 20.2C17.9 20.6 16.8 20.8 15.6 20.8C10.3 20.8 6 16.6 6 11.5C6 6.4 10.3 2.3 15.6 2.3Z" fill="#0a3bd8"/><path d="M8.5 12.6C11.7 12.6 14.2 15 14.2 18C14.2 21 11.7 23.4 8.5 23.4C7.8 23.4 7.2 23.3 6.6 23.1L3.5 24.6L4.2 21.6C3.3 20.6 2.8 19.4 2.8 18C2.8 15 5.3 12.6 8.5 12.6Z" fill="#fff" stroke="#0a3bd8" stroke-width="1.5"/></svg>
<svg class="a" style="left:1805px;top:258px" width="24" height="24" viewBox="0 0 24 24"><path d="M10 1.8H14L14.6 4.6C15.6 5 16.4 5.5 17.2 6.1L19.9 5.2L21.9 8.6L19.8 10.5C19.9 11.5 19.9 12.5 19.8 13.5L21.9 15.4L19.9 18.8L17.2 17.9C16.4 18.5 15.6 19 14.6 19.4L14 22.2H10L9.4 19.4C8.4 19 7.6 18.5 6.8 17.9L4.1 18.8L2.1 15.4L4.2 13.5C4.1 12.5 4.1 11.5 4.2 10.5L2.1 8.6L4.1 5.2L6.8 6.1C7.6 5.5 8.4 5 9.4 4.6Z" fill="none" stroke="#222" stroke-width="1.5" stroke-linejoin="round"/><circle cx="12" cy="12" r="3.2" fill="none" stroke="#0a3bd8" stroke-width="1.9"/></svg>
<svg class="a" style="left:1807px;top:888px" width="22" height="23" viewBox="0 0 22 23"><path d="M9 1.4L2.2 11.5L5.7 12.4L5.2 21.2L12.3 11L9.2 10.1Z" fill="none" stroke="#555" stroke-width="1.6" stroke-linejoin="round"/><path d="M11.4 5.9H19.8M14.2 11H19.8M11.4 15.9H19.8" stroke="#555" stroke-width="1.7"/></svg>
<div class="a" style="left:1322px;top:142px;width:472px;height:670px;overflow:hidden">
<div class="a" style="left:21px;top:-6px;width:32px;height:32px;border-radius:16px;background:#f6d441;overflow:hidden"><div class="a" style="left:10.5px;top:6px;width:11px;height:11px;border-radius:6px;background:#fff"></div><div class="a" style="left:5px;top:19px;width:22px;height:16px;border-radius:11px 11px 0 0;background:#fff"></div></div>
<div class="a" style="left:63px;top:-12px;width:313px;height:62px;background:#0639d6;border-radius:8px;"></div>
<div class="t" style="left:74.9px;top:4.5px;font-size:13px;line-height:normal;font-weight:normal;color:#fff;letter-spacing:-0.143px;">Những tài sản có Tên đơn vị quản lý là Bệnh viện</div>
<div class="t" style="left:74.9px;top:24.7px;font-size:13px;line-height:normal;font-weight:normal;color:#fff;letter-spacing:-0.053px;">Phụ sản tỉnh MISA thì điền Mã đơn vị là 002070</div>
<svg class="a" style="left:21px;top:66px" width="32" height="32" viewBox="0 0 48 48"><circle cx="24" cy="24" r="24" fill="#0639d6"/><circle cx="10.6" cy="15.6" r="6" fill="#d3e4ff"/><circle cx="37.4" cy="15.6" r="6" fill="#d3e4ff"/><rect x="7.4" y="11.3" width="33.2" height="26.8" rx="13" fill="#f4f8ff"/><rect x="11.3" y="19" width="25.4" height="15.1" rx="7.5" fill="#0c1a78"/><circle cx="17.6" cy="25.8" r="3.3" fill="#fff"/><circle cx="17.6" cy="25.8" r="2.2" fill="#0c1a78"/><circle cx="18.3" cy="25" r="0.8" fill="#fff"/><circle cx="30.4" cy="25.8" r="3.3" fill="#fff"/><circle cx="30.4" cy="25.8" r="2.2" fill="#0c1a78"/><circle cx="31.1" cy="25" r="0.8" fill="#fff"/><path d="M21 30.6Q24 32.6 27 30.6" fill="none" stroke="#fff" stroke-width="1.1"/></svg>
<div class="a" style="left:63px;top:66px;width:381px;height:188px;background:#fff;border-radius:9px;"></div>
<div class="t" style="left:79.0px;top:74.3px;font-size:13px;line-height:normal;font-weight:bold;color:#1f1f1f;letter-spacing:-0.458px;">Em đã phân tích và ghi nhận yêu cầu</div>
<div class="t" style="left:79.0px;top:94.5px;font-size:13px;line-height:normal;font-weight:normal;color:#1f1f1f;letter-spacing:-0.217px;">Cụ thể: Sẽ thực hiện <b>1 hành động</b> cập nhật</div>
<div class="a" style="left:78px;top:120px;width:351px;height:128px;background:#f4f4f4;border-radius:10px;"></div>
<div class="a" style="left:95px;top:132px;width:1px;height:17px;background:#222;border-radius:0;"></div>
<div class="a" style="left:95px;top:140.5px;width:16px;height:1.2px;background:#666;border-radius:0;"></div>
<div class="a" style="left:95px;top:196px;width:1px;height:9.5px;background:#222;border-radius:0;"></div>
<div class="a" style="left:95px;top:204.5px;width:16px;height:1.2px;background:#666;border-radius:0;"></div>
<div class="t" style="left:118.8px;top:133.8px;font-size:13px;line-height:normal;font-weight:normal;color:#262626;letter-spacing:-0.166px;"><b>Điều kiện:</b> Tên đơn vị quản lý tài sản theo kết quả</div>
<div class="t" style="left:118.8px;top:153.9px;font-size:13px;line-height:normal;font-weight:normal;color:#262626;letter-spacing:-0.082px;">tổng kiểm kê năm 2025 = "Bệnh viện Phụ sản tỉnh</div>
<div class="t" style="left:118.8px;top:174.1px;font-size:13px;line-height:normal;font-weight:normal;color:#262626;letter-spacing:-0.377px;">MISA"</div>
<div class="t" style="left:118.8px;top:197.8px;font-size:13px;line-height:normal;font-weight:normal;color:#3b5de7;letter-spacing:-0.135px;"><b style="color:#262626">Cập nhật:</b> Mã đơn vị quản lý tài sản theo kết quả</div>
<div class="t" style="left:118.8px;top:217.9px;font-size:13px;line-height:normal;font-weight:normal;color:#3b5de7;letter-spacing:-0.028px;">tổng kiểm kê năm 2025 = "002070"</div>
<div class="a" style="left:63px;top:262px;width:381px;height:154px;background:#e1e4fb;border:1px solid #9dcdf7;border-radius:10px;"></div>
<div class="t" style="left:79.0px;top:271.1px;font-size:13px;line-height:normal;font-weight:bold;color:#1f1f1f;letter-spacing:-1.01px;">Lưu ý</div>
<div class="a" style="left:84.70000000000005px;top:296.6px;width:4.6px;height:4.6px;background:#222;border-radius:3px;"></div>
<div class="a" style="left:84.70000000000005px;top:336.6px;width:4.6px;height:4.6px;background:#222;border-radius:3px;"></div>
<div class="a" style="left:84.70000000000005px;top:376.6px;width:4.6px;height:4.6px;background:#222;border-radius:3px;"></div>
<div class="t" style="left:99.7px;top:291.2px;font-size:13px;line-height:normal;font-weight:normal;color:#222;letter-spacing:-0.045px;">Hệ thống sẽ tìm kiếm và áp dụng cho những tài sản thỏa</div>
<div class="t" style="left:99.7px;top:311.2px;font-size:13px;line-height:normal;font-weight:normal;color:#222;letter-spacing:-0.054px;">mãn điều kiện khi bạn nhấn “Áp dụng”.</div>
<div class="t" style="left:99.7px;top:331.2px;font-size:13px;line-height:normal;font-weight:normal;color:#222;letter-spacing:-0.064px;">Nếu có nhiều điều kiện thì ưu tiên hành động theo thứ tự</div>
<div class="t" style="left:99.7px;top:351.2px;font-size:13px;line-height:normal;font-weight:normal;color:#222;letter-spacing:-0.035px;">nhập điều kiện.</div>
<div class="t" style="left:99.7px;top:371.2px;font-size:13px;line-height:normal;font-weight:normal;color:#222;letter-spacing:-0.077px;">Quá trình này có thể mất vài giây phụ thuộc vào độ lớn</div>
<div class="t" style="left:99.7px;top:391.2px;font-size:13px;line-height:normal;font-weight:normal;color:#222;letter-spacing:-0.081px;">dữ liệu cập nhật.</div>
<div class="a" style="left:60px;top:423px;width:76px;height:31px;background:transparent;border:3px solid #e8333f;border-radius:0;"></div>
<div class="a" style="left:64px;top:427px;width:68px;height:23px;background:#2c50e6;border-radius:0;"></div>
<div class="t" style="left:77.2px;top:430.5px;font-size:13px;line-height:normal;font-weight:normal;color:#fff;letter-spacing:-0.64px;">Áp dụng</div>
<svg class="a" style="left:21px;top:472px" width="32" height="32" viewBox="0 0 48 48"><circle cx="24" cy="24" r="24" fill="#0639d6"/><circle cx="10.6" cy="15.6" r="6" fill="#d3e4ff"/><circle cx="37.4" cy="15.6" r="6" fill="#d3e4ff"/><rect x="7.4" y="11.3" width="33.2" height="26.8" rx="13" fill="#f4f8ff"/><rect x="11.3" y="19" width="25.4" height="15.1" rx="7.5" fill="#0c1a78"/><circle cx="17.6" cy="25.8" r="3.3" fill="#fff"/><circle cx="17.6" cy="25.8" r="2.2" fill="#0c1a78"/><circle cx="18.3" cy="25" r="0.8" fill="#fff"/><circle cx="30.4" cy="25.8" r="3.3" fill="#fff"/><circle cx="30.4" cy="25.8" r="2.2" fill="#0c1a78"/><circle cx="31.1" cy="25" r="0.8" fill="#fff"/><path d="M21 30.6Q24 32.6 27 30.6" fill="none" stroke="#fff" stroke-width="1.1"/></svg>
<div class="a" style="left:63px;top:472px;width:381px;height:182px;background:#e1e4fb;border:1px solid #9dcdf7;border-radius:10px;"></div>
<div class="t" style="left:79.8px;top:481.3px;font-size:13px;line-height:normal;font-weight:bold;color:#3b5de7;letter-spacing:-0.453px;">Cập nhật thành công!</div>
<div class="t" style="left:79.8px;top:509.1px;font-size:13px;line-height:normal;font-weight:normal;color:#222;letter-spacing:-0.066px;"><b>4</b> Tài sản đã được cập nhật thành công theo cú pháp.</div>
<div class="t" style="left:79.8px;top:549.3px;font-size:13px;line-height:normal;font-weight:normal;color:#222;letter-spacing:-0.112px;"><b>Hành động 1</b>: Mã đơn vị quản lý tài sản theo kết quả tổng</div>
<div class="t" style="left:79.8px;top:569.3px;font-size:13px;line-height:normal;font-weight:normal;color:#222;letter-spacing:-0.014px;">kiểm kê năm 2025 = 002070 có <b>4</b> tài sản</div>
<div class="t" style="left:79.8px;top:609.4px;font-size:13px;line-height:normal;font-weight:normal;color:#222;letter-spacing:-0.032px;">Quý khách vui lòng kiểm tra lại các thông tin tài sản trước</div>
<div class="t" style="left:79.8px;top:629.4px;font-size:13px;line-height:normal;font-weight:normal;color:#222;letter-spacing:-0.053px;">khi lưu.</div>
</div>
<div class="a" style="left:1786px;top:406px;width:8px;height:404px;background:#b5b9c1;border-radius:4px;"></div>
<div class="a" style="left:1335px;top:822px;width:437px;height:102px;background:#fff;border:1.5px solid #0a3bd8;border-radius:15px;"></div>
<div class="t" style="left:1347.9px;top:839.2px;font-size:13px;line-height:normal;font-weight:normal;color:#757575;letter-spacing:-0.02px;">Nhập thông tin bạn cần vào đây</div>
<div class="a" style="left:1348px;top:879px;width:32px;height:32px;background:#fff;border:1px solid #c8cdd8;border-radius:16px;"></div>
<svg class="a" style="left:1356px;top:887px" width="16" height="16" viewBox="0 0 16 16"><path d="M8 0.8V15.2M0.8 8H15.2" stroke="#555d6b" stroke-width="1.5"/></svg>
<svg class="a" style="left:1726px;top:831px" width="33" height="33" viewBox="0 0 33 33"><defs><linearGradient id="sg" x1="0" y1="1" x2="1" y2="0"><stop offset="0" stop-color="#1747d8"/><stop offset="1" stop-color="#3a6cf0"/></linearGradient></defs><circle cx="16.5" cy="16.5" r="15.9" fill="url(#sg)"/><path d="M9.4 8.6L26 16.1L9.4 23.6L11.9 16Z" fill="#fff" stroke="#fff" stroke-width="2.6" stroke-linejoin="round"/><path d="M15.2 15.9H21.2" stroke="#2357e0" stroke-width="1.4"/></svg>
<svg class="a" style="left:1726px;top:879px" width="33" height="33" viewBox="0 0 33 33"><circle cx="16.5" cy="16.5" r="15.9" fill="#0a3bd8"/><rect x="13.1" y="5.6" width="7.8" height="15.2" rx="3.9" fill="#fff"/><path d="M15.3 8.6H18.7M15.8 10.4H18.2" stroke="#0a3bd8" stroke-width="1"/><path d="M9.6 13.2C9.6 18.6 12.6 22.2 17 22.2C21.4 22.2 24.4 18.6 24.4 13.2" fill="none" stroke="#fff" stroke-width="1.5"/><path d="M17 22.2V26" stroke="#fff" stroke-width="1.5"/></svg>
<div class="a" style="left:1322px;top:9px;width:1px;height:916px;background:#dddddd;border-radius:0;"></div>
<div class="a" style="left:1316.5px;top:415px;width:11px;height:48px;background:#fff;border:1px solid #d5dae3;border-radius:6px;box-shadow:0 1px 3px rgba(0,0,0,0.08);"></div>
<div class="a" style="left:1315.3px;top:432px;width:2px;height:14px;background:#a3b3ca;border-radius:0;"></div>
<div class="a" style="left:1318.4px;top:432px;width:2px;height:14px;background:#a3b3ca;border-radius:0;"></div>

</body></html>
